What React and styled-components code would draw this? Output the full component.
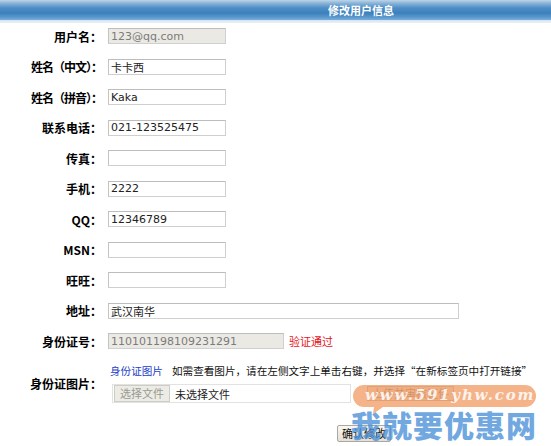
import React from 'react';
import styled, { createGlobalStyle } from 'styled-components';

const GlobalStyle = createGlobalStyle`
  html, body {
    margin: 0;
    padding: 0;
    background: #fff;
  }
  body {
    font-family: "Noto Sans CJK SC", "DejaVu Sans", sans-serif;
  }
`;

const Page = styled.div`
  position: relative;
  width: 551px;
  height: 446px;
  overflow: hidden;
`;

const Header = styled.div`
  height: 23px;
  background: linear-gradient(
    to bottom,
    #bed4e8 0px,
    #8db6da 3px,
    #4d8ec6 8px,
    #3c80bc 13px,
    #5896cc 17px,
    #7aaed9 20px,
    #d3e3f1 20px,
    #eaf2f9 23px
  );
  color: #fff;
  font-size: 11px;
  font-weight: bold;
  line-height: 20px;
  padding-left: 328px;
`;

const Form = styled.div`
  margin-top: -2px;
`;

const Row = styled.div`
  display: flex;
  align-items: center;
  height: ${p => (p.$tall ? '53px' : '30.5px')};
`;

const Label = styled.div`
  width: 102px;
  flex-shrink: 0;
  text-align: right;
  font-size: 12px;
  font-weight: bold;
  color: #000;
  white-space: nowrap;
  letter-spacing: ${p => (p.$tight ? '-1px' : '0')};
`;

const Field = styled.div`
  margin-left: 6px;
  display: flex;
  align-items: center;
  gap: 5px;
`;

const Stack = styled.div`
  margin-left: 8px;
  display: flex;
  flex-direction: column;
  gap: 7px;
`;

const Input = styled.input`
  box-sizing: border-box;
  width: ${p => p.$w || 118}px;
  height: 16px;
  margin: 0;
  padding: 0 2px;
  border: 1px solid #cfcfcf;
  border-top-color: #bdbdbd;
  border-left-color: #c4c4c4;
  background: ${p => (p.$off ? '#ebe9e3' : '#fff')};
  color: ${p => (p.$off ? '#7b7b7b' : '#222')};
  font: 11px "DejaVu Sans", "Noto Sans CJK SC", sans-serif;
  outline: none;
`;

const Valid = styled.span`
  color: #e3141a;
  font-size: 11px;
`;

const HintLine = styled.div`
  display: flex;
  align-items: center;
  gap: 9px;
  height: 14px;
  font-size: 10.6px;
  color: #111;
  white-space: nowrap;
`;

const Link = styled.a`
  color: #2240c8;
  text-decoration: none;
`;

const FileLine = styled.div`
  display: flex;
  align-items: center;
  margin-left: 2px;
`;

const FileBox = styled.div`
  box-sizing: border-box;
  width: 239px;
  height: 19px;
  border: 1px solid #e2e2e2;
  display: flex;
  align-items: center;
  padding-left: 1px;
  font-size: 11px;
  color: #222;
`;

const FileButton = styled.span`
  box-sizing: border-box;
  height: 17px;
  line-height: 15px;
  padding: 0 5px;
  margin-right: 5px;
  border: 1px solid #cdcdc6;
  background: #ecebe4;
  color: #9a9a94;
  font-size: 11px;
`;

const Upload = styled.button`
  margin-left: 16px;
  height: 15px;
  padding: 0 4px;
  border: 1px solid #bdbdb4;
  background: #efeee8;
  color: #888;
  font: 11px "Noto Sans CJK SC", sans-serif;
  line-height: 13px;
`;

const Actions = styled.div`
  display: flex;
  padding-left: 337px;
  margin-top: 15px;
`;

const Submit = styled.button`
  height: 17px;
  padding: 0 4px;
  border: 1px solid #a9a9a2;
  border-radius: 2px;
  background: linear-gradient(#f8f7f2, #e2e0d6);
  color: #111;
  font: 11px "Noto Sans CJK SC", sans-serif;
  line-height: 15px;
`;

const Mark = styled.div`
  position: absolute;
  left: 351px;
  top: 383px;
  width: 190px;
  height: 60px;
  pointer-events: none;
`;

const Bubble = styled.svg`
  position: absolute;
  left: 0;
  top: 0;
`;

const MarkUrl = styled.div`
  position: absolute;
  left: 14px;
  top: 3px;
  font: italic bold 15px "DejaVu Serif", serif;
  letter-spacing: 1.8px;
  color: rgba(255, 255, 255, 0.85);
  white-space: nowrap;
`;

const MarkName = styled.div`
  position: absolute;
  left: 0;
  top: 25px;
  font-size: 30px;
  line-height: 32px;
  font-weight: 900;
  letter-spacing: 1px;
  color: rgba(74, 144, 216, 0.8);
  white-space: nowrap;
`;

const rows = [
  { label: '用户名：', value: '123@qq.com', off: true },
  { label: '姓名（中文）：', value: '卡卡西', tight: true },
  { label: '姓名（拼音）：', value: 'Kaka', tight: true },
  { label: '联系电话：', value: '021-123525475' },
  { label: '传真：', value: '' },
  { label: '手机：', value: '2222' },
  { label: 'QQ：', value: '12346789' },
  { label: 'MSN：', value: '' },
  { label: '旺旺：', value: '' },
  { label: '地址：', value: '武汉南华', w: 351 },
];

export default function App() {
  return (
    <Page>
      <GlobalStyle />
      <Header>修改用户信息</Header>
      <Form>
        {rows.map(r => (
          <Row key={r.label}>
            <Label $tight={r.tight}>{r.label}</Label>
            <Field>
              <Input $w={r.w} $off={r.off} readOnly defaultValue={r.value} />
            </Field>
          </Row>
        ))}
        <Row>
          <Label>身份证号：</Label>
          <Field>
            <Input $w={176} $off readOnly defaultValue="110101198109231291" />
            <Valid>验证通过</Valid>
          </Field>
        </Row>
        <Row $tall>
          <Label>身份证图片：</Label>
          <Stack>
            <HintLine>
              <Link href="#">身份证图片</Link>
              <span>如需查看图片，请在左侧文字上单击右键，并选择“在新标签页中打开链接”</span>
            </HintLine>
            <FileLine>
              <FileBox>
                <FileButton>选择文件</FileButton>
                未选择文件
              </FileBox>
              <Upload type="button">上传并审核证件</Upload>
            </FileLine>
          </Stack>
        </Row>
        <Actions>
          <Submit type="button">确认修改</Submit>
        </Actions>
      </Form>

      <Mark>
        <Bubble width="190" height="34" viewBox="0 0 190 34">
          <path
            d="M13 2 H174 A11 11 0 0 1 174 24 H32 L22 31 L23 24 H13 A11 11 0 0 1 13 2 Z"
            fill="rgba(240, 150, 92, 0.72)"
          />
        </Bubble>
        <MarkUrl>www.591yhw.com</MarkUrl>
        <MarkName>我就要优惠网</MarkName>
      </Mark>
    </Page>
  );
}
